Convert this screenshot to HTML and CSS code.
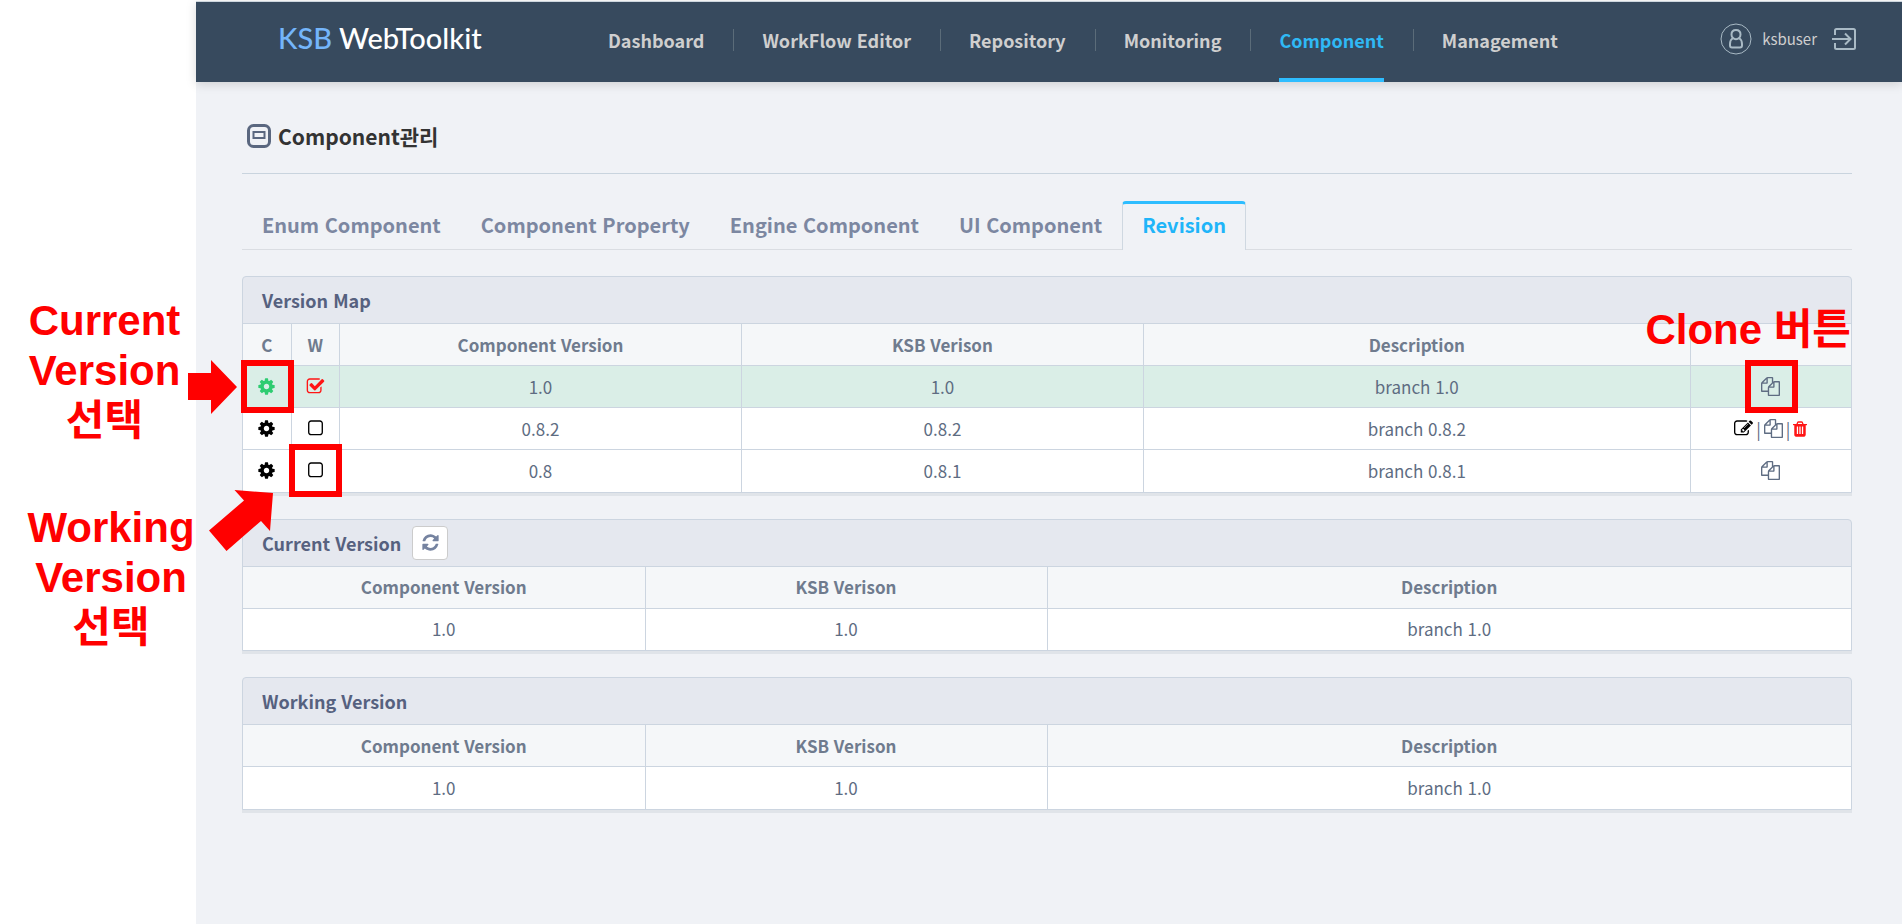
FILE: index.html
```html
<!DOCTYPE html>
<html lang="ko">
<head>
<meta charset="utf-8">
<title>KSB WebToolkit</title>
<link rel="stylesheet" href="styles.css">
</head>
<body>
<svg class="sprite" aria-hidden="true">
  <symbol id="cog" viewBox="0 0 1792 1792"><path d="M1152 896q0-106-75-181t-181-75-181 75-75 181 75 181 181 75 181-75 75-181zm512-109v222q0 12-8 23t-20 13l-185 28q-19 54-39 91 35 50 107 138 10 12 10 25t-9 23q-27 37-99 108t-94 71q-12 0-26-9l-138-108q-44 23-91 38-16 136-29 186-7 28-36 28h-222q-14 0-24.500-8.500t-11.500-21.500l-28-184q-49-16-90-37l-141 107q-10 9-25 9-14 0-25-11-126-114-165-168-7-10-7-23 0-12 8-23 15-21 51-66.500t54-70.500q-27-50-41-99l-183-27q-13-2-21-12.500t-8-23.500v-222q0-12 8-23t19-13l186-28q14-46 39-92-40-57-107-138-10-12-10-24 0-10 9-23 26-36 98.500-107.500t94.500-71.500q13 0 26 10l138 107q44-23 91-38 16-136 29-186 7-28 36-28h222q14 0 24.500 8.500t11.500 21.500l28 184q49 16 90 37l142-107q9-9 24-9 13 0 25 10 129 119 165 170 7 8 7 22 0 12-8 23-15 21-51 66.500t-54 70.500q26 50 41 98l183 28q13 2 21 12.500t8 23.500z"/></symbol>
  <symbol id="square" viewBox="0 0 1792 1792"><path d="M1312 256h-832q-66 0-113 47t-47 113v832q0 66 47 113t113 47h832q66 0 113-47t47-113v-832q0-66-47-113t-113-47zm288 160v832q0 119-84.500 203.500t-203.500 84.500h-832q-119 0-203.500-84.500t-84.500-203.500v-832q0-119 84.500-203.500t203.500-84.500h832q119 0 203.500 84.500t84.500 203.500z"/></symbol>
  <symbol id="check" viewBox="0 0 1792 1792"><path d="M1472 930v318q0 119-84.500 203.500t-203.500 84.500h-832q-119 0-203.500-84.500t-84.500-203.500v-832q0-119 84.500-203.500t203.500-84.500h832q63 0 117 25 15 7 18 23 3 17-9 29l-49 49q-10 10-23 10-3 0-9-2-23-6-45-6h-832q-66 0-113 47t-47 113v832q0 66 47 113t113 47h832q66 0 113-47t47-113v-254q0-13 9-22l64-64q10-10 23-10 6 0 12 3 20 8 20 29zm231-489l-814 814q-24 24-57 24t-57-24l-430-430q-24-24-24-57t24-57l110-110q24-24 57-24t57 24l263 263 647-647q24-24 57-24t57 24l110 110q24 24 24 57t-24 57z"/></symbol>
  <symbol id="edit" viewBox="0 0 1792 1792"><path d="M888 1184l116-116-152-152-116 116v56h96v96h56zm440-720q-16-16-33 1l-350 350q-17 17-1 33t33-1l350-350q17-17 1-33zm80 594v190q0 119-84.500 203.500t-203.500 84.500h-832q-119 0-203.500-84.500t-84.500-203.500v-832q0-119 84.500-203.500t203.500-84.500h832q63 0 117 25 15 7 18 23 3 17-10 29l-49 49q-14 14-32 8-23-6-45-6h-832q-66 0-113 47t-47 113v832q0 66 47 113t113 47h832q66 0 113-47t47-113v-126q0-13 9-22l64-64q15-15 35-7t20 29zm-96-738l288 288-672 672h-288v-288zm444 132l-92 92-288-288 92-92q28-28 68-28t68 28l152 152q28 28 28 68t-28 68z"/></symbol>
  <symbol id="trash" viewBox="192 0 1408 1792"><path d="M704 1376v-704q0-14-9-23t-23-9h-64q-14 0-23 9t-9 23v704q0 14 9 23t23 9h64q14 0 23-9t9-23zm256 0v-704q0-14-9-23t-23-9h-64q-14 0-23 9t-9 23v704q0 14 9 23t23 9h64q14 0 23-9t9-23zm256 0v-704q0-14-9-23t-23-9h-64q-14 0-23 9t-9 23v704q0 14 9 23t23 9h64q14 0 23-9t9-23zm-544-992h448l-48-117q-7-9-17-11h-317q-10 2-17 11zm928 32v64q0 14-9 23t-23 9h-96v948q0 83-47 143.500t-113 60.500h-832q-66 0-113-58.500t-47-141.500v-952h-96q-14 0-23-9t-9-23v-64q0-14 9-23t23-9h309l70-167q15-37 54-63t79-26h320q40 0 79 26t54 63l70 167h309q14 0 23 9t9 23z"/></symbol>
  <symbol id="copy" viewBox="0 0 1792 1792"><path d="M1696 384q40 0 68 28t28 68v1216q0 40-28 68t-68 28h-960q-40 0-68-28t-28-68v-288h-544q-40 0-68-28t-28-68v-672q0-40 20-88t48-76l408-408q28-28 76-48t88-20h416q40 0 68 28t28 68v328q68-40 128-40h416zm-544 213l-299 299h299v-299zm-640-384l-299 299h299v-299zm196 647l316-316v-416h-384v416q0 40-28 68t-68 28h-416v640h512v-256q0-40 20-88t48-76zm956 804v-1152h-384v416q0 40-28 68t-68 28h-416v640h896z"/></symbol>
  <symbol id="refresh" viewBox="0 0 1792 1792"><path d="M1639 1056q0 5-1 7-64 268-268 434.500t-478 166.500q-146 0-282.500-55t-243.500-157l-129 129q-19 19-45 19t-45-19-19-45v-448q0-26 19-45t45-19h448q26 0 45 19t19 45-19 45l-137 137q71 66 161 102t187 36q134 0 250-65t186-179q11-17 53-117 8-23 30-23h192q13 0 22.500 9.500t9.500 22.500zm25-800v448q0 26-19 45t-45 19h-448q-26 0-45-19t-19-45 19-45l138-138q-148-137-349-137-134 0-250 65t-186 179q-11 17-53 117-8 23-30 23h-199q-13 0-22.500-9.500t-9.500-22.500v-7q65-268 270-434.500t480-166.500q146 0 284 55.500t245 156.500l130-129q19-19 45-19t45 19 19 45z"/></symbol>
</svg>
<div class="page">
  <aside class="notes">
    <p class="note note-current">Current<br>Version<br>선택</p>
    <p class="note note-working">Working<br>Version<br>선택</p>
  </aside>
  <div class="app">
    <header class="topbar">
      <a class="logo" href="#"><span class="logo-accent">KSB</span> WebToolkit</a>
      <nav class="menu">
        <a href="#">Dashboard</a>
        <a href="#">WorkFlow Editor</a>
        <a href="#">Repository</a>
        <a href="#">Monitoring</a>
        <a href="#" class="active" aria-current="page">Component</a>
        <a href="#">Management</a>
      </nav>
      <div class="user">
        <svg class="avatar" viewBox="0 0 32 32" aria-hidden="true"><circle cx="16" cy="16" r="15" stroke-width="1"/><path stroke-width="2" d="M13 15C11.500 14 11.500 13 11.500 11.500C11.500 8.500 13.500 7 16 7S20.500 8.500 20.500 11.500C20.500 13 20.500 14 19 15C17.500 16.500 14.500 16.500 13 15C10.500 16.500 10 18.500 10 21V22.500Q10 24.500 12 24.500H20Q22 24.500 22 22.500V21C22 18.500 21.500 16.500 19 15"/></svg>
        <span class="username">ksbuser</span>
        <button class="logout" type="button" aria-label="Logout"><svg viewBox="0 0 24 22" aria-hidden="true"><path d="M3 7V2.500Q3 1 4.500 1H21.500Q23 1 23 2.500V19.500Q23 21 21.500 21H4.500Q3 21 3 19.500V15"/><path d="M0 11H18M13 5.500L18.500 11L13 16.500"/></svg></button>
      </div>
    </header>
    <main class="content">
      <h1 class="title"><svg class="title-icon" viewBox="0 0 24 24" aria-hidden="true"><rect x="1.500" y="1.500" width="21" height="21" rx="5" stroke-width="3"/><rect x="6.500" y="8" width="11" height="6" stroke-width="2"/></svg>Component관리</h1>
      <nav class="tabs">
        <a href="#">Enum Component</a>
        <a href="#">Component Property</a>
        <a href="#">Engine Component</a>
        <a href="#">UI Component</a>
        <a href="#" class="active" aria-current="page">Revision</a>
      </nav>

      <section class="panel">
        <h2 class="panel-head">Version Map</h2>
        <table class="grid">
          <colgroup><col class="w3"><col class="w3"><col class="w25"><col class="w25"><col class="w34"><col class="w10"></colgroup>
          <thead>
            <tr><th>C</th><th>W</th><th>Component Version</th><th>KSB Verison</th><th>Description</th><th class="anchor"><span class="note note-clone">Clone 버튼</span></th></tr>
          </thead>
          <tbody>
            <tr class="current">
              <td class="anchor marked">
                <label class="pick"><input type="radio" name="current" aria-label="Current 1.0" checked><svg class="icon"><use href="#cog"/></svg></label>
                <svg class="arrow arrow-right" viewBox="0 0 49 54" aria-hidden="true"><path d="M0 13H23V0L49 27L23 54V40H0z"/></svg>
              </td>
              <td><label class="pick"><input type="checkbox" aria-label="Working 1.0" checked><svg class="icon danger"><use href="#check"/></svg></label></td>
              <td>1.0</td><td>1.0</td><td>branch 1.0</td>
              <td class="anchor marked"><button class="act" type="button" aria-label="Clone 1.0"><svg class="icon"><use href="#copy"/></svg></button></td>
            </tr>
            <tr>
              <td><label class="pick"><input type="radio" name="current" aria-label="Current 0.8.2"><svg class="icon"><use href="#cog"/></svg></label></td>
              <td><label class="pick"><input type="checkbox" aria-label="Working 0.8.2"><svg class="icon"><use href="#square"/></svg></label></td>
              <td>0.8.2</td><td>0.8.2</td><td>branch 0.8.2</td>
              <td><div class="actions"><button class="act dark" type="button" aria-label="Edit 0.8.2"><svg class="icon"><use href="#edit"/></svg></button><span>|</span><button class="act" type="button" aria-label="Clone 0.8.2"><svg class="icon"><use href="#copy"/></svg></button><span>|</span><button class="act danger" type="button" aria-label="Delete 0.8.2"><svg class="icon narrow"><use href="#trash"/></svg></button></div></td>
            </tr>
            <tr>
              <td class="anchor">
                <label class="pick"><input type="radio" name="current" aria-label="Current 0.8"><svg class="icon"><use href="#cog"/></svg></label>
                <svg class="arrow arrow-up" viewBox="0 0 64 61" aria-hidden="true"><path d="M25.500 0L64 3L61 41L52 31L17.500 61L0 40.500L35 10.500z"/></svg>
              </td>
              <td class="anchor marked"><label class="pick"><input type="checkbox" aria-label="Working 0.8"><svg class="icon"><use href="#square"/></svg></label></td>
              <td>0.8</td><td>0.8.1</td><td>branch 0.8.1</td>
              <td><button class="act" type="button" aria-label="Clone 0.8"><svg class="icon"><use href="#copy"/></svg></button></td>
            </tr>
          </tbody>
        </table>
      </section>

      <section class="panel">
        <h2 class="panel-head">Current Version <button class="refresh" type="button" aria-label="Refresh"><svg class="icon"><use href="#refresh"/></svg></button></h2>
        <table class="grid">
          <colgroup><col class="w25"><col class="w25"><col class="w50"></colgroup>
          <thead><tr><th>Component Version</th><th>KSB Verison</th><th>Description</th></tr></thead>
          <tbody><tr><td>1.0</td><td>1.0</td><td>branch 1.0</td></tr></tbody>
        </table>
      </section>

      <section class="panel">
        <h2 class="panel-head">Working Version</h2>
        <table class="grid">
          <colgroup><col class="w25"><col class="w25"><col class="w50"></colgroup>
          <thead><tr><th>Component Version</th><th>KSB Verison</th><th>Description</th></tr></thead>
          <tbody><tr><td>1.0</td><td>1.0</td><td>branch 1.0</td></tr></tbody>
        </table>
      </section>
    </main>
  </div>
</div>
</body>
</html>
```

FILE: styles.css
```css
*, *::before, *::after { box-sizing: border-box; }
body {
  margin: 0;
  background: #fff;
  color: #5e6c82;
  font-family: "Noto Sans CJK KR", "Noto Sans", sans-serif;
  font-size: 17px;
}
a { color: inherit; text-decoration: none; }
button {
  padding: 0;
  border: 0;
  background: none;
  color: inherit;
  font: inherit;
  cursor: pointer;
}
.sprite { position: absolute; width: 0; height: 0; }
.page { display: flex; min-height: 100vh; }

/* Red guide notes */
.notes { flex: 0 0 196px; padding-top: 296px; }
.note {
  margin: 0;
  color: #f00;
  font: bold 42px/50px "Liberation Sans", "Noto Sans CJK KR", sans-serif;
  text-align: center;
  white-space: nowrap;
}
.note-current { padding-left: 13px; }
.note-working { padding-left: 26px; margin-top: 57px; }
.note-clone { position: absolute; right: 0; bottom: 10px; z-index: 1; }
.anchor { position: relative; }
.marked::after {
  content: "";
  position: absolute;
  top: calc(50% - 27px);
  left: calc(50% - 26px);
  width: 53px;
  height: 53px;
  border: 6px solid #f00;
  pointer-events: none;
  z-index: 1;
}
.arrow { position: absolute; fill: #f00; z-index: 1; }
.arrow-right { left: -55px; top: -6px; width: 49px; height: 54px; }
.arrow-up { left: -34px; top: 40px; width: 64px; height: 61px; }

.app { flex: 1; min-width: 0; margin-top: 1px; background: #f0f2f6; }

/* Top bar */
.topbar {
  display: flex;
  height: 81px;
  padding: 0 46px 0 82px;
  border-top: 1px solid #cdd6de;
  background: #374a5e;
  box-shadow: 0 2px 10px rgba(0, 0, 0, 0.15);
  color: #cfcfcf;
}
.logo {
  flex: 0 0 301px;
  padding-top: 16px;
  color: #fff;
  font: 500 29px/40px Lato, sans-serif;
}
.logo-accent { color: #74b5fa; }
.menu { display: flex; font-size: 18px; font-weight: bold; line-height: 76px; }
.menu a { position: relative; margin: 0 29px; white-space: nowrap; }
.menu a + a::before {
  content: "";
  position: absolute;
  top: 27px;
  left: -29px;
  height: 22px;
  border-left: 1px solid #5b6c79;
}
.menu .active { border-bottom: 4px solid #2ebdff; color: #2fb9f5; }
.user {
  display: flex;
  align-items: center;
  height: 73px;
  margin-left: auto;
  line-height: 24px;
}
.user svg { display: block; fill: none; stroke: #a9bac5; }
.avatar { width: 32px; height: 32px; }
.username { margin: 0 15px 0 10px; font-size: 15px; }
.logout svg { width: 24px; height: 22px; stroke-width: 2; }

/* Content */
.content { padding: 32px 50px 40px 46px; }
.title {
  display: flex;
  align-items: center;
  height: 60px;
  margin: 0;
  padding: 0 0 16px 5px;
  border-bottom: 1px solid #c9d4de;
  color: #333;
  font-size: 21px;
  line-height: 40px;
}
.title-icon { width: 24px; height: 24px; margin-right: 7px; fill: none; stroke: #5a677f; }
.tabs {
  display: flex;
  margin: 27px 0 1px;
  border-bottom: 1px solid #dadde2;
  color: #7c87a1;
  font-size: 20px;
  font-weight: bold;
  line-height: 42px;
}
.tabs a { margin-bottom: -1px; padding: 0 19px 4px; border: 1px solid transparent; border-top-width: 3px; border-bottom: 0; }
.tabs .active {
  border-color: #2ebdff #cfd8e1 #cfd8e1;
  border-radius: 4px 4px 0 0;
  background: #f0f2f6;
  color: #1fb5f9;
}
.panel {
  margin-top: 26px;
  border: 1px solid #ccd5e0;
  border-radius: 4px 4px 0 0;
  background: #e5e8ef;
  box-shadow: 0 3px 0 #e0e4e9;
}
.panel-head {
  display: flex;
  align-items: center;
  gap: 11px;
  height: 46px;
  margin: 0;
  padding-left: 19px;
  color: #56617f;
  font-size: 18px;
  font-weight: bold;
}
.refresh {
  display: grid;
  place-items: center;
  width: 36px;
  height: 34px;
  border: 1px solid #ccc;
  border-radius: 4px;
  background: #fff;
  color: #7583a0;
}
.grid { width: 100%; border-collapse: collapse; table-layout: fixed; background: #fff; }
.grid th, .grid td {
  height: 42px;
  padding: 0;
  border: 1px solid #ccd5e0;
  border-width: 1px 0 0 1px;
  line-height: 24px;
  text-align: center;
}
.grid th { background: #f5f7f9; color: #6f7b8e; font-weight: bold; }
.grid th:first-child, .grid td:first-child { border-left: 0; }
.grid .current { background: #daeee7; }
.w3 { width: 3%; }
.w10 { width: 10%; }
.w25 { width: 25%; }
.w34 { width: 34%; }
.w50 { width: 50%; }

.icon { display: block; width: 19px; height: 19px; fill: currentColor; }
.narrow { width: 14px; height: 18px; }
.pick { display: block; width: 19px; margin: 0 auto; color: #000; }
.pick input { position: absolute; opacity: 0; margin: 0; pointer-events: none; }
.current .pick { color: #2ecc71; }
.danger, .current .pick .danger { color: #ff1515; }
.act { display: block; margin: 0 auto; }
.dark { color: #000; }
.actions { display: flex; align-items: center; justify-content: center; gap: 3px; }
.actions .act { margin: 0; }
```
